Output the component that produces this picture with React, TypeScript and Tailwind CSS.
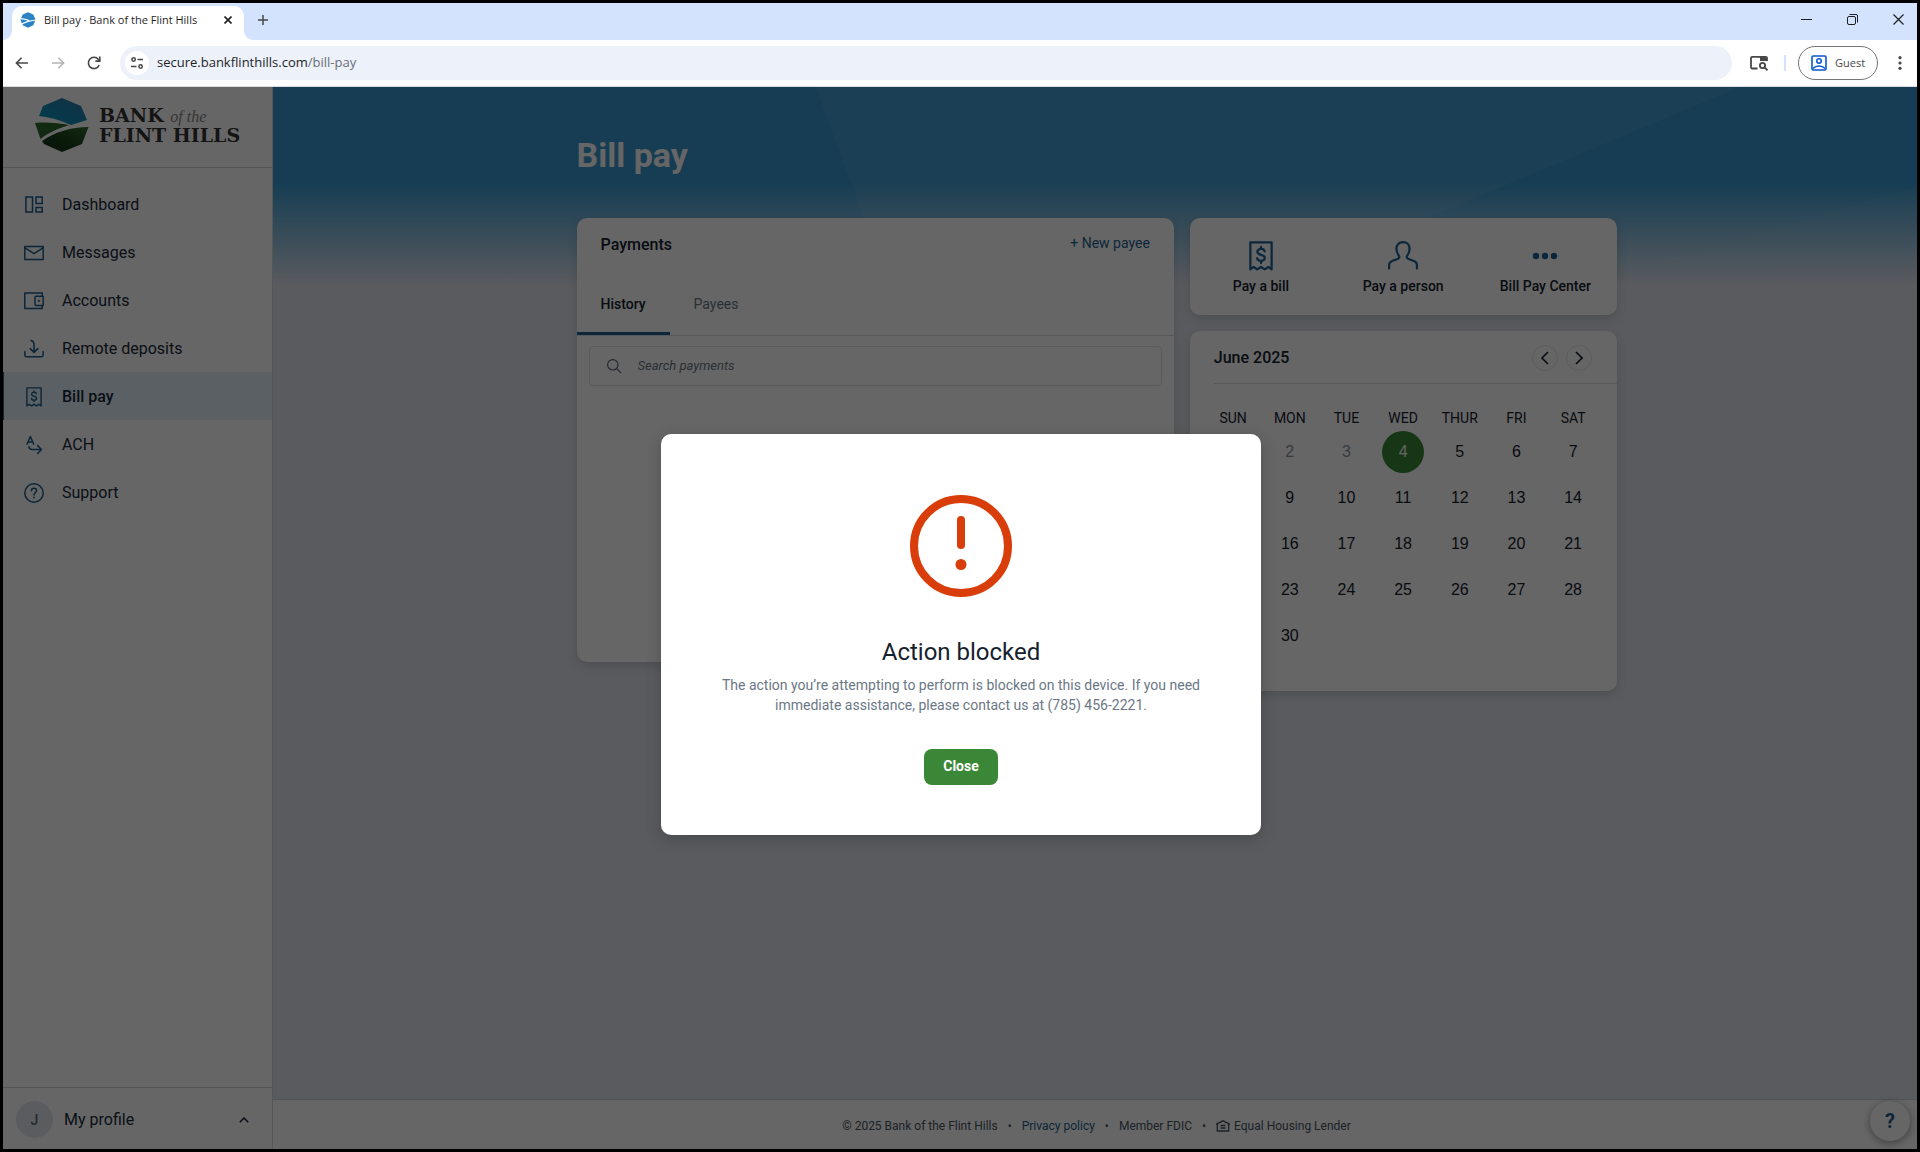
import { useState } from 'react';
import type { ReactNode } from 'react';

const WEEKDAYS = ['SUN', 'MON', 'TUE', 'WED', 'THUR', 'FRI', 'SAT'];
const WEEKS = [0, 1, 2, 3, 4].map((w) => WEEKDAYS.map((_, d) => w * 7 + d + 1));
const DAYS_IN_MONTH = 30;
const TODAY = 4;

function Svg({ size = 20, sw = 1.5, className, children }: { size?: number; sw?: number; className?: string; children: ReactNode }) {
  return (
    <svg
      width={size}
      height={size}
      viewBox="0 0 20 20"
      fill="none"
      stroke="currentColor"
      strokeWidth={sw}
      strokeLinecap="round"
      strokeLinejoin="round"
      className={className}
      aria-hidden="true"
    >
      {children}
    </svg>
  );
}

function DashboardIcon() {
  return (
    <Svg>
      <path d="M1.9 1.9h6.6v15.2H1.9zM12 1.9h6.2v6.6H12zM12 12.5h6.2v4.6H12z" strokeLinejoin="miter" />
    </Svg>
  );
}

function MessagesIcon() {
  return (
    <Svg>
      <path d="M.8 3.6h18.4v13H.8z" />
      <path d="M1 4.8l9 5.8 9-5.8" />
    </Svg>
  );
}

function AccountsIcon() {
  return (
    <Svg>
      <path d="M18.2 4.8V2H.8v15.6h17.4v-2.8" />
      <path d="M12 5.2h7.2v9.4H12a1 1 0 0 1-1-1V6.2a1 1 0 0 1 1-1z" />
      <path d="M14.2 9.9h1.6M15 9.1v1.6" strokeWidth="1" />
    </Svg>
  );
}

function DepositIcon() {
  return (
    <Svg>
      <path d="M.9 12.6v3.6a1.6 1.6 0 0 0 1.6 1.6h15a1.6 1.6 0 0 0 1.6-1.6v-3.6" />
      <path d="M7 1.4c2.4.4 3 2 3 4v7.8M6.2 9.6l3.8 3.8 3.8-3.8" />
    </Svg>
  );
}

function BillIcon({ size = 20, sw = 1.4 }: { size?: number; sw?: number }) {
  return (
    <Svg size={size} sw={sw}>
      <path d="M2.9.9h14.2v18l-2.2-1.6-2.4 1.6-2.5-1.6-2.5 1.6-2.4-1.6-2.2 1.6z" />
      <path d="M12.4 6.9c-.2-1-1.1-1.6-2.4-1.6s-2.4.7-2.4 1.9c0 2.8 4.9 1.3 4.9 4 0 1.3-1.1 2-2.5 2s-2.4-.6-2.6-1.7M10 3.9v1.4M10 13.2v1.5" />
    </Svg>
  );
}

function AchIcon() {
  return (
    <Svg>
      <path d="M3 9.2L6.4 1.5l3.3 7.7M4.1 6.9h4.6" />
      <path d="M5 11.8c.3 1.8 1.3 2.7 3.2 2.7h9M13.6 10.6l3.9 3.9-3.9 4" />
    </Svg>
  );
}

function SupportIcon() {
  return (
    <Svg>
      <circle cx="10" cy="10" r="9.2" />
      <path d="M7.4 7.8c0-1.6 1.1-2.5 2.6-2.5s2.6.9 2.6 2.3c0 2-2.6 2.1-2.6 4.3" />
      <path d="M10 14.5v.1" strokeWidth="1.8" />
    </Svg>
  );
}

const NAV = [
  { label: 'Dashboard', icon: <DashboardIcon /> },
  { label: 'Messages', icon: <MessagesIcon /> },
  { label: 'Accounts', icon: <AccountsIcon /> },
  { label: 'Remote deposits', icon: <DepositIcon /> },
  { label: 'Bill pay', icon: <BillIcon />, active: true },
  { label: 'ACH', icon: <AchIcon /> },
  { label: 'Support', icon: <SupportIcon /> },
];

const ACTIONS = [
  { label: 'Pay a bill', icon: <BillIcon size={30} sw={1.5} /> },
  {
    label: 'Pay a person',
    icon: (
      <Svg size={30} sw={1.5}>
        <path d="M.7 18.3v-2.2c0-1.5.6-2.3 2-2.8l3.6-1.3c1.5-.5 1.5-1.6.7-2.6-.9-1.2-1.4-2.500-1.400-4.200C5.600 2.600 7.300.8 10 .8s4.400 1.800 4.400 4.400c0 1.700-.5 3-1.400 4.200-.8 1-.8 2.100.7 2.600l3.600 1.300c1.400.5 2 1.300 2 2.800v2.200" />
      </Svg>
    ),
  },
  {
    label: 'Bill Pay Center',
    icon: (
      <svg width="30" height="30" viewBox="0 0 30 30" fill="currentColor" aria-hidden="true">
        <circle cx="6" cy="15" r="3.2" />
        <circle cx="15" cy="15" r="3.2" />
        <circle cx="24" cy="15" r="3.2" />
      </svg>
    ),
  },
];

function Favicon() {
  return (
    <svg width="16" height="16" viewBox="0 0 16 16" aria-hidden="true">
      <path d="M8 .3l5.300 2.200 2.300 5.300-2.300 5.500L8 15.700l-5.300-2.400L.4 7.800l2.300-5.300z" fill="#2b83c6" />
      <path d="M0 6.300c4 0 6.500.5 9.800 2.100l6.200-1v1.200C10 9.300 6 10.500 1.800 12.700L1.400 11.600C3.500 10.300 5.700 9.300 8 8.700 5.500 7.700 3 7.400 0 7.500z" fill="#fff" />
    </svg>
  );
}

function BrandMark() {
  return (
    <svg width="54" height="54" viewBox="0 0 54 54" aria-hidden="true">
      <defs>
        <linearGradient id="sky" x1="0" y1="1" x2="1" y2="0">
          <stop offset="0" stopColor="#0a9cc4" />
          <stop offset=".5" stopColor="#1689b4" />
          <stop offset="1" stopColor="#3a7cae" />
        </linearGradient>
        <linearGradient id="field" x1="0" y1="0" x2="1" y2="1">
          <stop offset="0" stopColor="#2e7031" />
          <stop offset="1" stopColor="#225a20" />
        </linearGradient>
        <linearGradient id="hill" x1="1" y1="0" x2="0" y2="1">
          <stop offset="0" stopColor="#2f6a2c" />
          <stop offset=".6" stopColor="#173d18" />
          <stop offset="1" stopColor="#12351a" />
        </linearGradient>
      </defs>
      <path d="M27 0l19 8 6 14-16 5C25 22 15 19 4 18l4-10z" fill="url(#sky)" />
      <path d="M0 25c12-1 23 0 34 2C22 31 13 35 5.500 41z" fill="url(#field)" />
      <path d="M53.500 29L47 46 27 54 9 46l-2-3C20 34 36 29 53.500 29z" fill="url(#hill)" />
    </svg>
  );
}

function BrowserChrome() {
  return (
    <header className="shrink-0 font-['Open_Sans',sans-serif]">
      <div className="flex h-[37px] items-end justify-between bg-[#d3e3fd]">
        <div className="flex items-end">
          <svg width="9" height="9" viewBox="0 0 9 9" fill="#fff" aria-hidden="true">
            <path d="M9 0v9H0a9 9 0 0 0 9-9z" />
          </svg>
          <div className="flex h-[34px] w-[232px] items-center rounded-t-[10px] bg-white pr-2 pb-1.5 pl-2">
            <Favicon />
            <span className="ml-2 flex-1 text-[11px] whitespace-nowrap text-[#1f1f1f]">Bill pay · Bank of the Flint Hills</span>
            <button aria-label="Close tab" className="grid size-4 place-items-center text-[#1f1f1f]">
              <svg width="8" height="8" viewBox="0 0 8 8" stroke="currentColor" strokeWidth="1.6">
                <path d="M.5.5l7 7M7.500.5l-7 7" />
              </svg>
            </button>
          </div>
          <svg width="9" height="9" viewBox="0 0 9 9" fill="#fff" aria-hidden="true">
            <path d="M0 0v9h9a9 9 0 0 1-9-9z" />
          </svg>
          <button aria-label="New tab" className="mb-2.5 grid size-5 place-items-center text-[#474747]">
            <svg width="10" height="10" viewBox="0 0 10 10" stroke="currentColor" strokeWidth="1.5">
              <path d="M5 0v10M0 5h10" />
            </svg>
          </button>
        </div>
        <div className="flex h-full items-center pb-1 text-[#1f1f1f]">
          <button aria-label="Minimize" className="grid w-[46px] place-items-center">
            <svg width="11" height="11" viewBox="0 0 11 11" stroke="currentColor">
              <path d="M0 5.500h11" />
            </svg>
          </button>
          <button aria-label="Restore" className="grid w-[46px] place-items-center">
            <svg width="11" height="11" viewBox="0 0 11 11" fill="none" stroke="currentColor">
              <rect x=".5" y="2.500" width="8" height="8" rx="1.500" />
              <path d="M2.500.5H9A1.500 1.500 0 0 1 10.500 2v6.500" />
            </svg>
          </button>
          <button aria-label="Close window" className="mr-[-4px] grid w-[46px] place-items-center">
            <svg width="11" height="11" viewBox="0 0 11 11" stroke="currentColor" strokeWidth="1.2">
              <path d="M.5.5l10 10M10.500.5l-10 10" />
            </svg>
          </button>
        </div>
      </div>

      <div className="flex h-[47px] items-center border-b border-[#dadce0] bg-white pl-[11px] text-[#474747]">
        <button aria-label="Back" className="grid size-4 place-items-center">
          <Svg size={16} sw={2}>
            <path d="M17.500 10H3M9.500 3.500L3 10l6.500 6.500" strokeLinecap="butt" strokeLinejoin="miter" />
          </Svg>
        </button>
        <button aria-label="Forward" className="ml-5 grid size-4 place-items-center text-[#b4b4b4]">
          <Svg size={16} sw={2}>
            <path d="M2.500 10H17M10.500 3.500L17 10l-6.500 6.500" strokeLinecap="butt" strokeLinejoin="miter" />
          </Svg>
        </button>
        <button aria-label="Reload" className="ml-5 grid size-4 place-items-center">
          <Svg size={16} sw={2}>
            <path d="M16.500 12.500A7 7 0 1 1 15.300 5.300L17 7.200M17.300 2v5.600h-5.600" strokeLinecap="butt" strokeLinejoin="miter" />
          </Svg>
        </button>
        <div className="ml-[18px] flex h-[34px] flex-1 items-center rounded-full bg-[#ecf1fa] pl-[5px]">
          <span className="grid size-6 place-items-center rounded-full bg-white">
            <svg width="14" height="14" viewBox="0 0 14 14" fill="none" stroke="currentColor" strokeWidth="1.5">
              <circle cx="3.600" cy="3.500" r="1.700" />
              <path d="M7.500 3.500H13M1 10.500h5.500" />
              <circle cx="10.600" cy="10.500" r="1.700" />
            </svg>
          </span>
          <span className="ml-2 text-[13px] text-[#1f1f1f]">
            secure.bankflinthills.com<span className="text-[#6b6f76]">/bill-pay</span>
          </span>
        </div>
        <svg width="18" height="16" viewBox="0 0 18 16" fill="none" stroke="currentColor" strokeWidth="1.8" className="ml-[18px]" aria-hidden="true">
          <path d="M7.500 13.500H2.200A1.200 1.200 0 0 1 1 12.300V3a1.200 1.200 0 0 1 1.200-1.200h13.600A1.200 1.200 0 0 1 17 3v3" />
          <path d="M10 2h7v4h-7z" fill="currentColor" strokeWidth="0" />
          <circle cx="12.500" cy="10.500" r="2.600" />
          <path d="M14.500 12.300l3 3" />
        </svg>
        <span className="ml-4 h-4 w-0.5 bg-[#d3e3fd]" />
        <button className="ml-3 flex h-[34px] w-20 items-center rounded-full border border-[#747775] pl-3 text-[11px] text-[#474747]">
          <svg width="16" height="16" viewBox="0 0 16 16" fill="none" stroke="#0b57d0" strokeWidth="1.6" aria-hidden="true">
            <rect x="1" y="1" width="14" height="14" rx="1.200" />
            <circle cx="8" cy="6" r="2.200" />
            <path d="M2 13.500c3-3.400 9-3.400 12 0" />
          </svg>
          <span className="ml-2">Guest</span>
        </button>
        <button aria-label="Menu" className="mr-[15px] ml-5 grid h-4 w-1 place-items-center">
          <svg width="4" height="16" viewBox="0 0 4 16" fill="currentColor">
            <circle cx="2" cy="2.700" r="1.600" />
            <circle cx="2" cy="8" r="1.600" />
            <circle cx="2" cy="13.300" r="1.600" />
          </svg>
        </button>
      </div>
    </header>
  );
}

function Sidebar() {
  return (
    <aside className="flex w-[270px] shrink-0 flex-col border-r border-[#d3d6dc] bg-white">
      <div className="flex h-[81px] items-center border-b border-[#cfd2d8] pb-1 pl-8">
        <BrandMark />
        <div className="ml-2.5 font-['DejaVu_Serif',serif] text-[19px] leading-[18px] font-bold text-[#333]">
          <div className="whitespace-nowrap">
            BANK <span className="font-['Liberation_Serif',serif] text-[16px] font-normal text-[#888] italic">of the</span>
          </div>
          <div className="whitespace-nowrap">FLINT HILLS</div>
        </div>
      </div>
      <nav className="flex-1 pt-3">
        {NAV.map((item) => (
          <a
            key={item.label}
            href="#"
            className={`flex h-12 items-center gap-[18px] pt-0.5 text-base text-[#1b2a3a] ${
              item.active ? 'border-l border-[#1e5f8f] bg-[#e1f0f8] pl-5 font-medium' : 'pl-[21px]'
            }`}
          >
            <span className="text-[#1e5f8f]">{item.icon}</span>
            {item.label}
          </a>
        ))}
      </nav>
      <button className="flex h-[62px] items-center border-t border-[#cfd2d8] pt-0.5 pr-[23px] pl-[13px] text-left">
        <span className="grid size-[37px] place-items-center rounded-full bg-[#e1e5ee] text-sm font-medium text-[#5d6878]">J</span>
        <span className="ml-[11px] flex-1 text-base text-[#1b2a3a]">My profile</span>
        <svg width="10" height="6" viewBox="0 0 10 6" fill="none" stroke="#1b2a3a" strokeWidth="1.6" aria-hidden="true">
          <path d="M.8 5.200L5 1l4.200 4.200" />
        </svg>
      </button>
    </aside>
  );
}

// Faceted blue banner that fades into the page background
function HeroBackground() {
  return (
    <svg className="absolute inset-x-0 top-0 h-[200px] w-full" viewBox="0 0 1644 200" preserveAspectRatio="none" aria-hidden="true">
      <defs>
        <linearGradient id="fade" x1="0" y1="0" x2="0" y2="1">
          <stop offset=".48" stopColor="#e2e4ec" stopOpacity="0" />
          <stop offset="1" stopColor="#e2e4ec" />
        </linearGradient>
      </defs>
      <rect width="1644" height="200" fill="#389ad1" />
      <path d="M543 0h924L989 200H616z" fill="#459fd2" />
      <path d="M1644 100v100H1300z" fill="#3f9dd2" />
      <rect width="1644" height="200" fill="url(#fade)" />
    </svg>
  );
}

function Payments() {
  return (
    <section className="h-[444px] rounded-[10px] bg-white shadow-[0_4px_12px_rgba(0,0,0,0.15)]">
      <div className="flex h-[54px] items-center justify-between px-6">
        <h2 className="text-base font-medium text-[#16212e]">Payments</h2>
        <button className="pb-1 text-sm text-[#1e5f8f]">+ New payee</button>
      </div>
      <div className="flex h-16 border-b border-[#d9dce1] text-sm">
        <button className="border-b-[3px] border-[#1e6296] px-6 pt-1 font-medium text-[#16212e]">History</button>
        <button className="border-b-[3px] border-transparent px-6 pt-1 text-[#6b7785]">Payees</button>
      </div>
      <label className="mx-3 mt-2.5 flex h-10 items-center rounded border border-[#e0e2e6] pl-4">
        <Svg size={16} sw={1.5} className="text-[#5d6878]">
          <circle cx="8.500" cy="8.500" r="6.500" />
          <path d="M13.300 13.300l5 5" />
        </Svg>
        <input
          type="search"
          aria-label="Search payments"
          placeholder="Search payments"
          className="ml-4 flex-1 text-[13px] italic outline-none placeholder:text-[#6b7785]"
        />
      </label>
    </section>
  );
}

function dayClass(day: number) {
  if (day === TODAY) return 'bg-[#3a8738] text-white';
  return day < TODAY ? 'text-[#8b95a1]' : 'text-[#16212e]';
}

function Calendar() {
  return (
    <section className="rounded-[10px] bg-white pb-8 shadow-[0_4px_12px_rgba(0,0,0,0.15)]">
      <div className="ml-6 flex h-[53px] items-center border-b border-[#d9dce1] pt-0.5 pr-[25px]">
        <h2 className="flex-1 text-base font-medium text-[#16212e]">June 2025</h2>
        <div className="flex gap-2 text-[#16212e]">
          <button aria-label="Previous month" className="grid size-[26px] place-items-center rounded-full border border-[#e4e6ea]">
            <svg width="8" height="14" viewBox="0 0 8 14" fill="none" stroke="currentColor" strokeWidth="1.6">
              <path d="M7 1L1 7l6 6" />
            </svg>
          </button>
          <button aria-label="Next month" className="grid size-[26px] place-items-center rounded-full border border-[#e4e6ea]">
            <svg width="8" height="14" viewBox="0 0 8 14" fill="none" stroke="currentColor" strokeWidth="1.6">
              <path d="M1 1l6 6-6 6" />
            </svg>
          </button>
        </div>
      </div>
      <div className="px-[15px] pt-[22px]">
        <table className="w-full table-fixed text-center">
          <thead>
            <tr className="h-[23px] text-sm text-[#16212e]">
              {WEEKDAYS.map((d) => (
                <th key={d} className="font-normal">
                  {d}
                </th>
              ))}
            </tr>
          </thead>
          <tbody>
            {WEEKS.map((week) => (
              <tr key={week[0]} className="h-[46px]">
                {week.map((day) => (
                  <td key={day}>
                    {day <= DAYS_IN_MONTH && (
                      <button
                        className={`mx-auto grid size-[42px] place-items-center rounded-full font-['Liberation_Sans',sans-serif] text-base ${dayClass(day)}`}
                      >
                        {day}
                      </button>
                    )}
                  </td>
                ))}
              </tr>
            ))}
          </tbody>
        </table>
      </div>
    </section>
  );
}

function Footer() {
  return (
    <footer className="flex h-[50px] items-center justify-center gap-2.5 border-t border-[#cfd2d8] bg-white pt-0.5 pl-[3px] text-xs text-[#4a5563]">
      <span>© 2025 Bank of the Flint Hills</span>
      <span>•</span>
      <a href="#" className="text-[#1e5f8f]">Privacy policy</a>
      <span>•</span>
      <span>Member FDIC</span>
      <span>•</span>
      <span className="flex items-center gap-1">
        <svg width="14" height="12" viewBox="0 0 14 12" fill="none" stroke="currentColor" strokeWidth="1.3" aria-hidden="true">
          <path d="M0 4.300L7 .8l7 3.500M1.300 4v7h11.400V4M4.500 5.500h5M4.500 8h5" />
        </svg>
        Equal Housing Lender
      </span>
    </footer>
  );
}

function BlockedDialog({ onClose }: { onClose: () => void }) {
  return (
    <div className="absolute inset-0 flex items-center justify-center bg-black/60 pt-8 pl-0.5">
      <div
        role="dialog"
        aria-modal="true"
        aria-labelledby="blocked-title"
        className="flex w-[600px] flex-col items-center rounded-[10px] bg-white px-14 pt-[61px] pb-[50px] text-center shadow-[0_4px_16px_rgba(0,0,0,0.2)]"
      >
        <svg width="102" height="102" viewBox="0 0 102 102" fill="none" stroke="#d93d0a" strokeWidth="8" aria-hidden="true">
          <circle cx="51" cy="51" r="47" />
          <path d="M51 25v25" strokeLinecap="round" />
          <circle cx="51" cy="69.500" r="5.500" fill="#d93d0a" stroke="none" />
        </svg>
        <h2 id="blocked-title" className="mt-[39px] text-2xl leading-8 text-[#16212e]">
          Action blocked
        </h2>
        <p className="mt-[7px] text-sm leading-5 text-[#6b7785]">
          The action you’re attempting to perform is blocked on this device. If you need immediate assistance, please contact us at (785) 456-2221.
        </p>
        <button onClick={onClose} className="mt-[34px] h-9 w-[74px] rounded-lg bg-[#3a8738] pb-0.5 text-sm font-bold text-white">
          Close
        </button>
      </div>
    </div>
  );
}

export default function App() {
  const [blocked, setBlocked] = useState(true);

  return (
    <div className="flex min-h-screen flex-col overflow-hidden border-[3px] border-black bg-white font-[Roboto,sans-serif]">
      <BrowserChrome />
      <div className="relative flex flex-1">
        <Sidebar />
        <div className="relative flex flex-1 flex-col bg-[#e2e4ec]">
          <HeroBackground />
          <main className="relative flex-1 pt-12 pl-[3px]">
            <div className="mx-auto max-w-[1040px]">
              <h1 className="mb-[43px] text-[34px] leading-10 font-bold text-white">Bill pay</h1>
              <div className="grid grid-cols-[7fr_5fr] items-start gap-4">
                <Payments />
                <div className="space-y-4">
                  <section className="grid h-[97px] grid-cols-3 rounded-[10px] bg-white shadow-[0_4px_12px_rgba(0,0,0,0.15)]">
                    {ACTIONS.map((a) => (
                      <button key={a.label} className="flex flex-col items-center pt-[23px] text-sm font-medium text-[#16212e]">
                        <span className="text-[#1e6296]">{a.icon}</span>
                        <span className="mt-[5px]">{a.label}</span>
                      </button>
                    ))}
                  </section>
                  <Calendar />
                </div>
              </div>
            </div>
          </main>
          <Footer />
          <button
            aria-label="Help"
            className="absolute right-[7px] bottom-2 size-10 rounded-full bg-white text-xl font-bold text-[#1e5f8f] shadow-[0_2px_8px_rgba(0,0,0,0.4)]"
          >
            ?
          </button>
        </div>
        {blocked && <BlockedDialog onClose={() => setBlocked(false)} />}
      </div>
    </div>
  );
}
